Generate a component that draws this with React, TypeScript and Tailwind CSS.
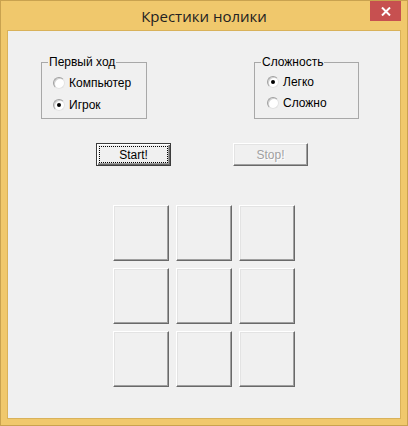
const ui = { fontFamily: '"Liberation Sans", Arial, sans-serif' };

function Radio({ label, checked }: { label: string; checked?: boolean }) {
  return (
    <div className="flex h-[14px] items-center">
      <span className="flex h-[12px] w-[12px] items-center justify-center rounded-full border border-t-[#a0a0a0] border-l-[#a0a0a0] border-r-[#e3e3e3] border-b-[#e3e3e3] bg-white shadow-[inset_1px_1px_0_#d0d0d0]">
        {checked && <span className="h-[4px] w-[4px] rounded-full bg-black" />}
      </span>
      <span className="ml-[4px] text-[12px] leading-[14px] text-black">{label}</span>
    </div>
  );
}

function GroupBox({
  title,
  className,
  children,
}: {
  title: string;
  className: string;
  children: React.ReactNode;
}) {
  return (
    <div className={`relative h-[57px] border border-[#a8a8a8] ${className}`}>
      <span className="absolute -top-[8px] left-[6px] bg-[#f0f0f0] px-[1px] text-[12px] leading-[14px] text-black">
        {title}
      </span>
      {children}
    </div>
  );
}

function Cell() {
  return (
    <button className="h-[56px] w-[56px] border border-t-white border-l-white border-r-[#696969] border-b-[#696969] bg-[#f0f0f0] shadow-[inset_-1px_-1px_0_#a0a0a0,inset_1px_1px_0_#e3e3e3]" />
  );
}

export default function App() {
  return (
    <div
      className="flex h-[426px] w-[408px] flex-col border border-[#c9a24f] bg-[#f0c86c] px-[6px] pb-[6px]"
      style={ui}
    >
      {/* title bar */}
      <div className="relative flex h-[29px] shrink-0 items-center justify-center">
        <span
          className="pt-[1px] text-[15px] text-[#222]"
          style={{ fontFamily: '"Open Sans", "Noto Sans", sans-serif' }}
        >
          Крестики нолики
        </span>
        <div className="absolute right-0 top-0 flex h-[20px] w-[31px] items-center justify-center bg-[#c75050]">
          <svg width="10" height="9" viewBox="0 0 10 9">
            <path d="M1 0.5 L9 8.5 M9 0.5 L1 8.5" stroke="white" strokeWidth="2" />
          </svg>
        </div>
      </div>

      {/* client area */}
      <div className="flex flex-1 flex-col border border-[#d9b25a] bg-[#f0f0f0]">
        <div className="mt-[31px] flex">
          <GroupBox title="Первый ход" className="ml-[33px] w-[106px]">
            <div className="flex flex-col gap-[8px] pl-[11px] pt-[13px]">
              <Radio label="Компьютер" />
              <Radio label="Игрок" checked />
            </div>
          </GroupBox>
          <GroupBox title="Сложность" className="ml-[107px] w-[105px]">
            <div className="flex flex-col gap-[7px] pl-[12px] pt-[12px]">
              <Radio label="Легко" checked />
              <Radio label="Сложно" />
            </div>
          </GroupBox>
        </div>

        <div className="mt-[24px] flex">
          <button className="ml-[88px] flex h-[23px] w-[75px] border border-[#3c3c3c] bg-[#f0f0f0] p-[2px] shadow-[inset_1px_1px_0_white,inset_-1px_-1px_0_#696969,inset_-2px_-2px_0_#a0a0a0]">
            <span className="flex flex-1 items-center justify-center border border-dotted border-black text-[12px] leading-none text-black">
              Start!
            </span>
          </button>
          <button className="ml-[62px] flex h-[23px] w-[75px] items-center justify-center border border-t-white border-l-white border-r-[#696969] border-b-[#696969] bg-[#f0f0f0] text-[12px] text-[#a0a0a0] shadow-[inset_-1px_-1px_0_#a0a0a0,inset_1px_1px_0_#e3e3e3] [text-shadow:1px_1px_0_white]">
            Stop!
          </button>
        </div>

        <div className="ml-[105px] mt-[39px] grid w-max grid-cols-3 gap-x-[7px] gap-y-[7px]">
          {Array.from({ length: 9 }).map((_, i) => (
            <Cell key={i} />
          ))}
        </div>
      </div>
    </div>
  );
}
